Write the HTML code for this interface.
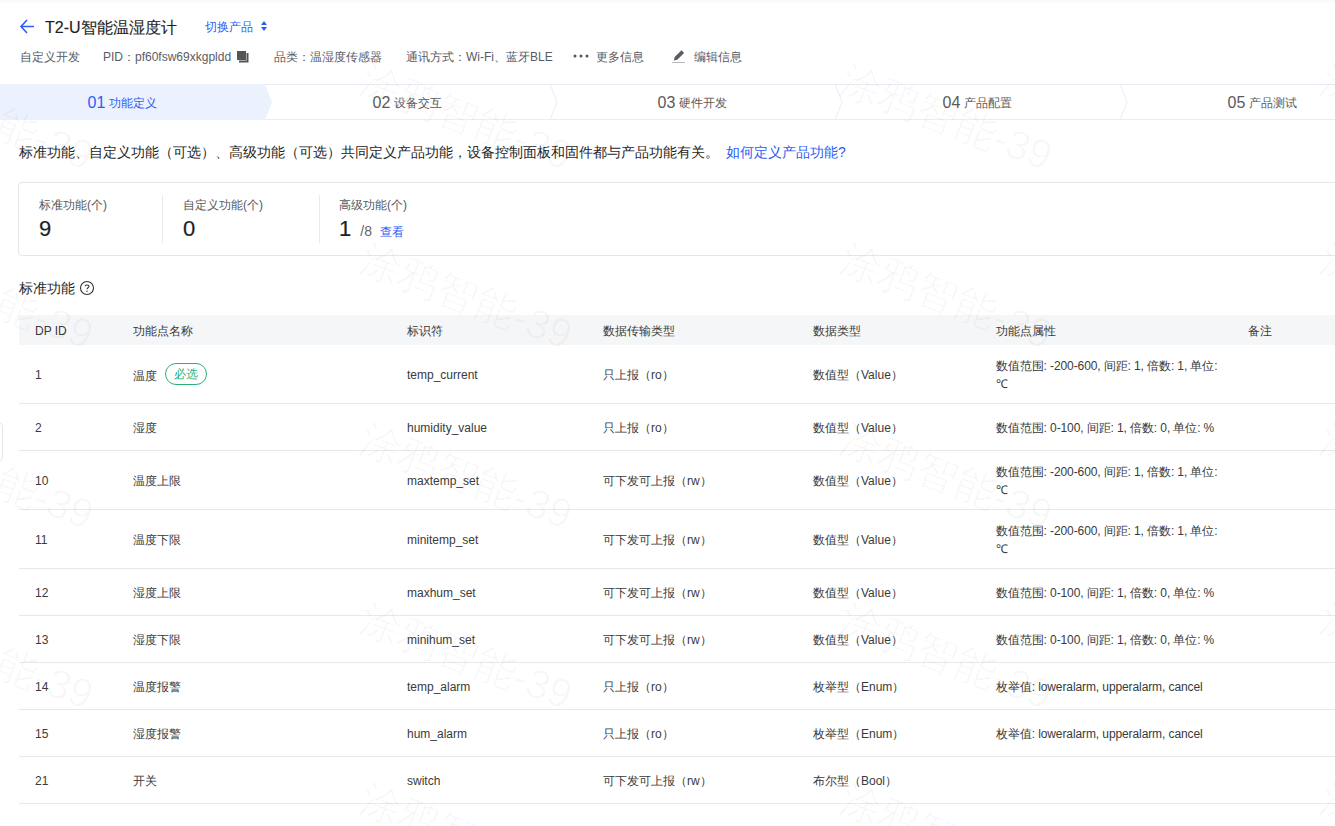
<!DOCTYPE html>
<html><head><meta charset="utf-8">
<style>
*{margin:0;padding:0;box-sizing:border-box}
html,body{width:1335px;height:826px;overflow:hidden;background:#fff}
body{font-family:"Liberation Sans",sans-serif;color:#333;position:relative;font-size:12px}
.abs{position:absolute;white-space:nowrap}
.topshade{position:absolute;left:0;top:0;width:1335px;height:4px;background:linear-gradient(#f9f9fa,#fdfdfd)}
.title{left:45px;top:18px;font-size:16px;font-weight:normal;color:#1f1f1f;line-height:20px;-webkit-text-stroke:0.15px #1f1f1f}
.switch{left:205px;top:19px;color:#2d5cf6;line-height:16px}
.info{top:49px;line-height:16px;color:#595c66}
.steps{position:absolute;left:0;top:84px;width:1335px;height:36px}
.step{position:absolute;top:0;height:36px;line-height:36px;text-align:center;color:#5a5a5a;font-size:12px}
.step b{font-weight:normal;font-size:16px;margin-right:4px;position:relative;top:1px}
.desc{left:19px;top:143px;font-size:14px;line-height:18px;color:#262626}
.card{position:absolute;left:18px;top:182px;width:1340px;height:74px;border:1px solid #e6e6e6;border-radius:4px}
.stat{position:absolute;top:14px}
.stat .l{color:#595959;font-size:12px;line-height:16px}
.stat .v{font-size:22px;line-height:24px;color:#1f1f1f;margin-top:4px;-webkit-text-stroke:0.2px #1f1f1f}
.vd{position:absolute;top:12px;width:1px;height:48px;background:#ebebeb}
.sect{left:19px;top:279px;font-size:14px;line-height:18px;color:#262626}
.thead{position:absolute;left:19px;top:315px;width:1320px;height:30px;background:#f5f6f8}
.row{position:absolute;left:19px;width:1320px;border-bottom:1px solid #e8e8e8}
.tag{display:inline-block;margin-left:8px;padding:0 8px;height:22px;line-height:20px;border:1px solid #2bb07a;color:#2bb07a;border-radius:11px;vertical-align:middle;position:relative;top:-3px}
.c{position:absolute;white-space:nowrap;font-size:12px;color:#3a3a3a;line-height:18px}
.wm{position:absolute;font-size:41px;line-height:41px;color:rgba(0,0,0,0.026);transform:rotate(21deg);transform-origin:0 0;white-space:nowrap;pointer-events:none}
</style></head><body>
<div class="topshade"></div>
<div style="position:absolute;left:-20px;top:422px;width:23px;height:40px;border:1px solid #e4e6ec;border-radius:5px"></div>
<!-- back arrow -->
<svg class="abs" style="left:19px;top:18px" width="16" height="16" viewBox="0 0 16 16"><path d="M8 2 L2 8.5 L8 15 M2 8.5 H15" stroke="#2d5cf6" stroke-width="1.6" fill="none"/></svg>
<div class="abs title">T2-U智能温湿度计</div>
<div class="abs switch">切换产品</div>
<svg class="abs" style="left:260px;top:20px" width="8" height="12" viewBox="0 0 8 12"><path d="M4 1 L7 5 H1Z M1 7 H7 L4 11Z" fill="#2d5cf6"/></svg>

<div class="abs info" style="left:20px">自定义开发</div>
<div class="abs info" style="left:103px">PID：pf60fsw69xkgpldd</div>
<svg class="abs" style="left:237px;top:51px" width="12" height="12" viewBox="0 0 12 12"><rect x="0" y="0" width="9" height="9" fill="#555"/><path d="M10.5 2 V10.5 H2" stroke="#555" stroke-width="2" fill="none"/></svg>
<div class="abs info" style="left:274px">品类：温湿度传感器</div>
<div class="abs info" style="left:406px">通讯方式：Wi-Fi、蓝牙BLE</div>
<svg class="abs" style="left:573px;top:53px" width="16" height="6" viewBox="0 0 16 6"><circle cx="2" cy="3" r="1.5" fill="#555"/><circle cx="8" cy="3" r="1.5" fill="#555"/><circle cx="14" cy="3" r="1.5" fill="#555"/></svg>
<div class="abs info" style="left:596px">更多信息</div>
<svg class="abs" style="left:671px;top:49px" width="14" height="14" viewBox="0 0 14 14"><path d="M2.8 11.6 L3.7 8.1 L10.5 1.3 L13.1 3.9 L6.3 10.7Z" fill="#595c66"/><rect x="1" y="13.4" width="13" height="1.6" fill="#8a8d96"/></svg>
<div class="abs info" style="left:694px">编辑信息</div>

<div class="steps">
  <svg style="position:absolute;left:0;top:0" width="1335" height="36" viewBox="0 0 1335 36">
    <path d="M0 0 H265 L272 18 L265 36 H0Z" fill="#ebf2fe"/>
    <path d="M265 0.5 H1335 M265 35.5 H1335" stroke="#e8ecf6" stroke-width="1" fill="none"/>
    <path d="M550 0 L557 18 L550 36 M835 0 L842 18 L835 36 M1120 0 L1127 18 L1120 36" stroke="#e8ecf6" stroke-width="1" fill="none"/>
  </svg>
  <div class="step" style="left:-20px;width:285px;color:#2d5cf6"><b>01</b>功能定义</div>
  <div class="step" style="left:265px;width:285px"><b>02</b>设备交互</div>
  <div class="step" style="left:550px;width:285px"><b>03</b>硬件开发</div>
  <div class="step" style="left:835px;width:285px"><b>04</b>产品配置</div>
  <div class="step" style="left:1120px;width:285px"><b>05</b>产品测试</div>
</div>

<div class="abs desc">标准功能、自定义功能（可选）、高级功能（可选）共同定义产品功能，设备控制面板和固件都与产品功能有关。<span style="color:#2d5cf6;margin-left:7px">如何定义产品功能?</span></div>

<div class="card">
  <div class="stat" style="left:20px"><div class="l">标准功能(个)</div><div class="v">9</div></div>
  <div class="vd" style="left:143px"></div>
  <div class="stat" style="left:164px"><div class="l">自定义功能(个)</div><div class="v">0</div></div>
  <div class="vd" style="left:300px"></div>
  <div class="stat" style="left:320px"><div class="l">高级功能(个)</div><div class="v">1<span style="font-size:14px;color:#666;margin-left:9px;-webkit-text-stroke:0">/8</span><span style="font-size:12px;color:#2d5cf6;margin-left:8px;-webkit-text-stroke:0">查看</span></div></div>
</div>

<div class="abs sect">标准功能</div>
<svg class="abs" style="left:79px;top:280px" width="16" height="16" viewBox="0 0 16 16"><circle cx="8" cy="8" r="6.5" stroke="#333" stroke-width="1.1" fill="none"/><path d="M6 6.3 C6 4.5 10 4.5 10 6.3 C10 7.6 8 7.8 8 9.3" stroke="#333" stroke-width="1.1" fill="none"/><circle cx="8" cy="11.3" r="0.7" fill="#333"/></svg>

<div class="thead"></div>
<!--TBL-->
<div class="c" style="left:35px;top:322px">DP ID</div>
<div class="c" style="left:133px;top:322px">功能点名称</div>
<div class="c" style="left:407px;top:322px">标识符</div>
<div class="c" style="left:603px;top:322px">数据传输类型</div>
<div class="c" style="left:813px;top:322px">数据类型</div>
<div class="c" style="left:996px;top:322px">功能点属性</div>
<div class="c" style="left:1248px;top:322px">备注</div>
<div class="row" style="top:345px;height:59px"></div>
<div class="c" style="left:35px;top:366px">1</div>
<div class="c" style="left:133px;top:366px">温度<span class="tag">必选</span></div>
<div class="c" style="left:407px;top:366px">temp_current</div>
<div class="c" style="left:603px;top:366px">只上报（ro）</div>
<div class="c" style="left:813px;top:366px">数值型（Value）</div>
<div class="c attr" style="left:996px;top:357px;letter-spacing:-0.1px">数值范围: -200-600, 间距: 1, 倍数: 1, 单位:<br>℃</div>
<div class="row" style="top:403px;height:48px"></div>
<div class="c" style="left:35px;top:419px">2</div>
<div class="c" style="left:133px;top:419px">湿度</div>
<div class="c" style="left:407px;top:419px">humidity_value</div>
<div class="c" style="left:603px;top:419px">只上报（ro）</div>
<div class="c" style="left:813px;top:419px">数值型（Value）</div>
<div class="c" style="left:996px;top:419px;letter-spacing:-0.1px">数值范围: 0-100, 间距: 1, 倍数: 0, 单位: %</div>
<div class="row" style="top:450px;height:60px"></div>
<div class="c" style="left:35px;top:472px">10</div>
<div class="c" style="left:133px;top:472px">温度上限</div>
<div class="c" style="left:407px;top:472px">maxtemp_set</div>
<div class="c" style="left:603px;top:472px">可下发可上报（rw）</div>
<div class="c" style="left:813px;top:472px">数值型（Value）</div>
<div class="c attr" style="left:996px;top:463px;letter-spacing:-0.1px">数值范围: -200-600, 间距: 1, 倍数: 1, 单位:<br>℃</div>
<div class="row" style="top:509px;height:60px"></div>
<div class="c" style="left:35px;top:531px">11</div>
<div class="c" style="left:133px;top:531px">温度下限</div>
<div class="c" style="left:407px;top:531px">minitemp_set</div>
<div class="c" style="left:603px;top:531px">可下发可上报（rw）</div>
<div class="c" style="left:813px;top:531px">数值型（Value）</div>
<div class="c attr" style="left:996px;top:522px;letter-spacing:-0.1px">数值范围: -200-600, 间距: 1, 倍数: 1, 单位:<br>℃</div>
<div class="row" style="top:568px;height:48px"></div>
<div class="c" style="left:35px;top:584px">12</div>
<div class="c" style="left:133px;top:584px">湿度上限</div>
<div class="c" style="left:407px;top:584px">maxhum_set</div>
<div class="c" style="left:603px;top:584px">可下发可上报（rw）</div>
<div class="c" style="left:813px;top:584px">数值型（Value）</div>
<div class="c" style="left:996px;top:584px;letter-spacing:-0.1px">数值范围: 0-100, 间距: 1, 倍数: 0, 单位: %</div>
<div class="row" style="top:615px;height:48px"></div>
<div class="c" style="left:35px;top:631px">13</div>
<div class="c" style="left:133px;top:631px">湿度下限</div>
<div class="c" style="left:407px;top:631px">minihum_set</div>
<div class="c" style="left:603px;top:631px">可下发可上报（rw）</div>
<div class="c" style="left:813px;top:631px">数值型（Value）</div>
<div class="c" style="left:996px;top:631px;letter-spacing:-0.1px">数值范围: 0-100, 间距: 1, 倍数: 0, 单位: %</div>
<div class="row" style="top:662px;height:48px"></div>
<div class="c" style="left:35px;top:678px">14</div>
<div class="c" style="left:133px;top:678px">温度报警</div>
<div class="c" style="left:407px;top:678px">temp_alarm</div>
<div class="c" style="left:603px;top:678px">只上报（ro）</div>
<div class="c" style="left:813px;top:678px">枚举型（Enum）</div>
<div class="c" style="left:996px;top:678px;letter-spacing:-0.1px">枚举值: loweralarm, upperalarm, cancel</div>
<div class="row" style="top:709px;height:48px"></div>
<div class="c" style="left:35px;top:725px">15</div>
<div class="c" style="left:133px;top:725px">湿度报警</div>
<div class="c" style="left:407px;top:725px">hum_alarm</div>
<div class="c" style="left:603px;top:725px">只上报（ro）</div>
<div class="c" style="left:813px;top:725px">枚举型（Enum）</div>
<div class="c" style="left:996px;top:725px;letter-spacing:-0.1px">枚举值: loweralarm, upperalarm, cancel</div>
<div class="row" style="top:756px;height:48px"></div>
<div class="c" style="left:35px;top:772px">21</div>
<div class="c" style="left:133px;top:772px">开关</div>
<div class="c" style="left:407px;top:772px">switch</div>
<div class="c" style="left:603px;top:772px">可下发可上报（rw）</div>
<div class="c" style="left:813px;top:772px">布尔型（Bool）</div>
<!--/TBL-->
<!--WM-->
<div class="wm" style="left:-110px;top:59px">涂鸦智能-39</div>
<div class="wm" style="left:369px;top:59px">涂鸦智能-39</div>
<div class="wm" style="left:849px;top:59px">涂鸦智能-39</div>
<div class="wm" style="left:1329px;top:59px">涂鸦智能-39</div>
<div class="wm" style="left:-110px;top:238px">涂鸦智能-39</div>
<div class="wm" style="left:369px;top:238px">涂鸦智能-39</div>
<div class="wm" style="left:849px;top:238px">涂鸦智能-39</div>
<div class="wm" style="left:1329px;top:238px">涂鸦智能-39</div>
<div class="wm" style="left:-110px;top:418px">涂鸦智能-39</div>
<div class="wm" style="left:369px;top:418px">涂鸦智能-39</div>
<div class="wm" style="left:849px;top:418px">涂鸦智能-39</div>
<div class="wm" style="left:1329px;top:418px">涂鸦智能-39</div>
<div class="wm" style="left:-110px;top:598px">涂鸦智能-39</div>
<div class="wm" style="left:369px;top:598px">涂鸦智能-39</div>
<div class="wm" style="left:849px;top:598px">涂鸦智能-39</div>
<div class="wm" style="left:1329px;top:598px">涂鸦智能-39</div>
<div class="wm" style="left:-110px;top:778px">涂鸦智能-39</div>
<div class="wm" style="left:369px;top:778px">涂鸦智能-39</div>
<div class="wm" style="left:849px;top:778px">涂鸦智能-39</div>
<div class="wm" style="left:1329px;top:778px">涂鸦智能-39</div>
<!--/WM-->
</body></html>
